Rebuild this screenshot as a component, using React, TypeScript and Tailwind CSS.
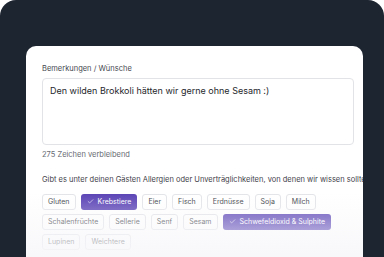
import { Check } from 'lucide-react'

const row1 = [
  { name: 'Gluten' },
  { name: 'Krebstiere', on: true },
  { name: 'Eier' },
  { name: 'Fisch' },
  { name: 'Erdnüsse' },
  { name: 'Soja' },
  { name: 'Milch' },
]
const row2 = [
  { name: 'Schalenfrüchte' },
  { name: 'Sellerie' },
  { name: 'Senf' },
  { name: 'Sesam' },
  { name: 'Schwefeldioxid & Sulphite', on: true },
]
const row3 = [{ name: 'Lupinen' }, { name: 'Weichtere' }]

function Chip({ name, on }: { name: string; on?: boolean }) {
  if (on) {
    return (
      <span className="flex h-[16px] items-center gap-[4px] whitespace-nowrap rounded-[3px] bg-[#5a43b5] px-[6px] text-[7px] text-white">
        <Check size={7} strokeWidth={2} /> {name}
      </span>
    )
  }
  return (
    <span className="flex h-[16px] items-center whitespace-nowrap rounded-[3px] border border-[#e3e4e8] bg-white px-[5px] text-[7px] text-[#3a3d45]">
      {name}
    </span>
  )
}

export default function App() {
  return (
    <div className="h-[257px] w-[384px] overflow-hidden bg-white" style={{ fontFamily: 'Inter, sans-serif' }}>
      <div className="h-full rounded-t-[16px] bg-[#1d2531] px-[26px] pt-[46px]">
        <div className="relative h-full w-[337px] overflow-hidden rounded-t-[10px] bg-white px-[16px] pt-[17px]">
          <p className="text-[7.5px] text-[#45484f]">Bemerkungen / Wünsche</p>
          <div className="mt-[4px] h-[67px] w-[312px] rounded-[4px] border border-[#e2e3e7] px-[7px] pt-[5px] text-[9px] text-[#25272c]">
            Den wilden Brokkoli hätten wir gerne ohne Sesam :)
          </div>
          <p className="mt-[4px] text-[7.5px] text-[#676a72]">275 Zeichen verbleibend</p>
          <p className="mt-[13px] whitespace-nowrap text-[7.5px] text-[#3f424a]">
            Gibt es unter deinen Gästen Allergien oder Unverträglichkeiten, von denen wir wissen sollten?
          </p>
          <div className="mt-[9px] flex flex-col gap-[4px]">
            <div className="flex gap-[5px]">{row1.map(c => <Chip key={c.name} {...c} />)}</div>
            <div className="flex gap-[5px]">{row2.map(c => <Chip key={c.name} {...c} />)}</div>
            <div className="flex gap-[5px]">{row3.map(c => <Chip key={c.name} {...c} />)}</div>
          </div>
          <div className="pointer-events-none absolute inset-x-0 bottom-0 h-[64px] bg-gradient-to-b from-white/0 to-[#f7f7fa]/90" />
        </div>
      </div>
    </div>
  )
}
